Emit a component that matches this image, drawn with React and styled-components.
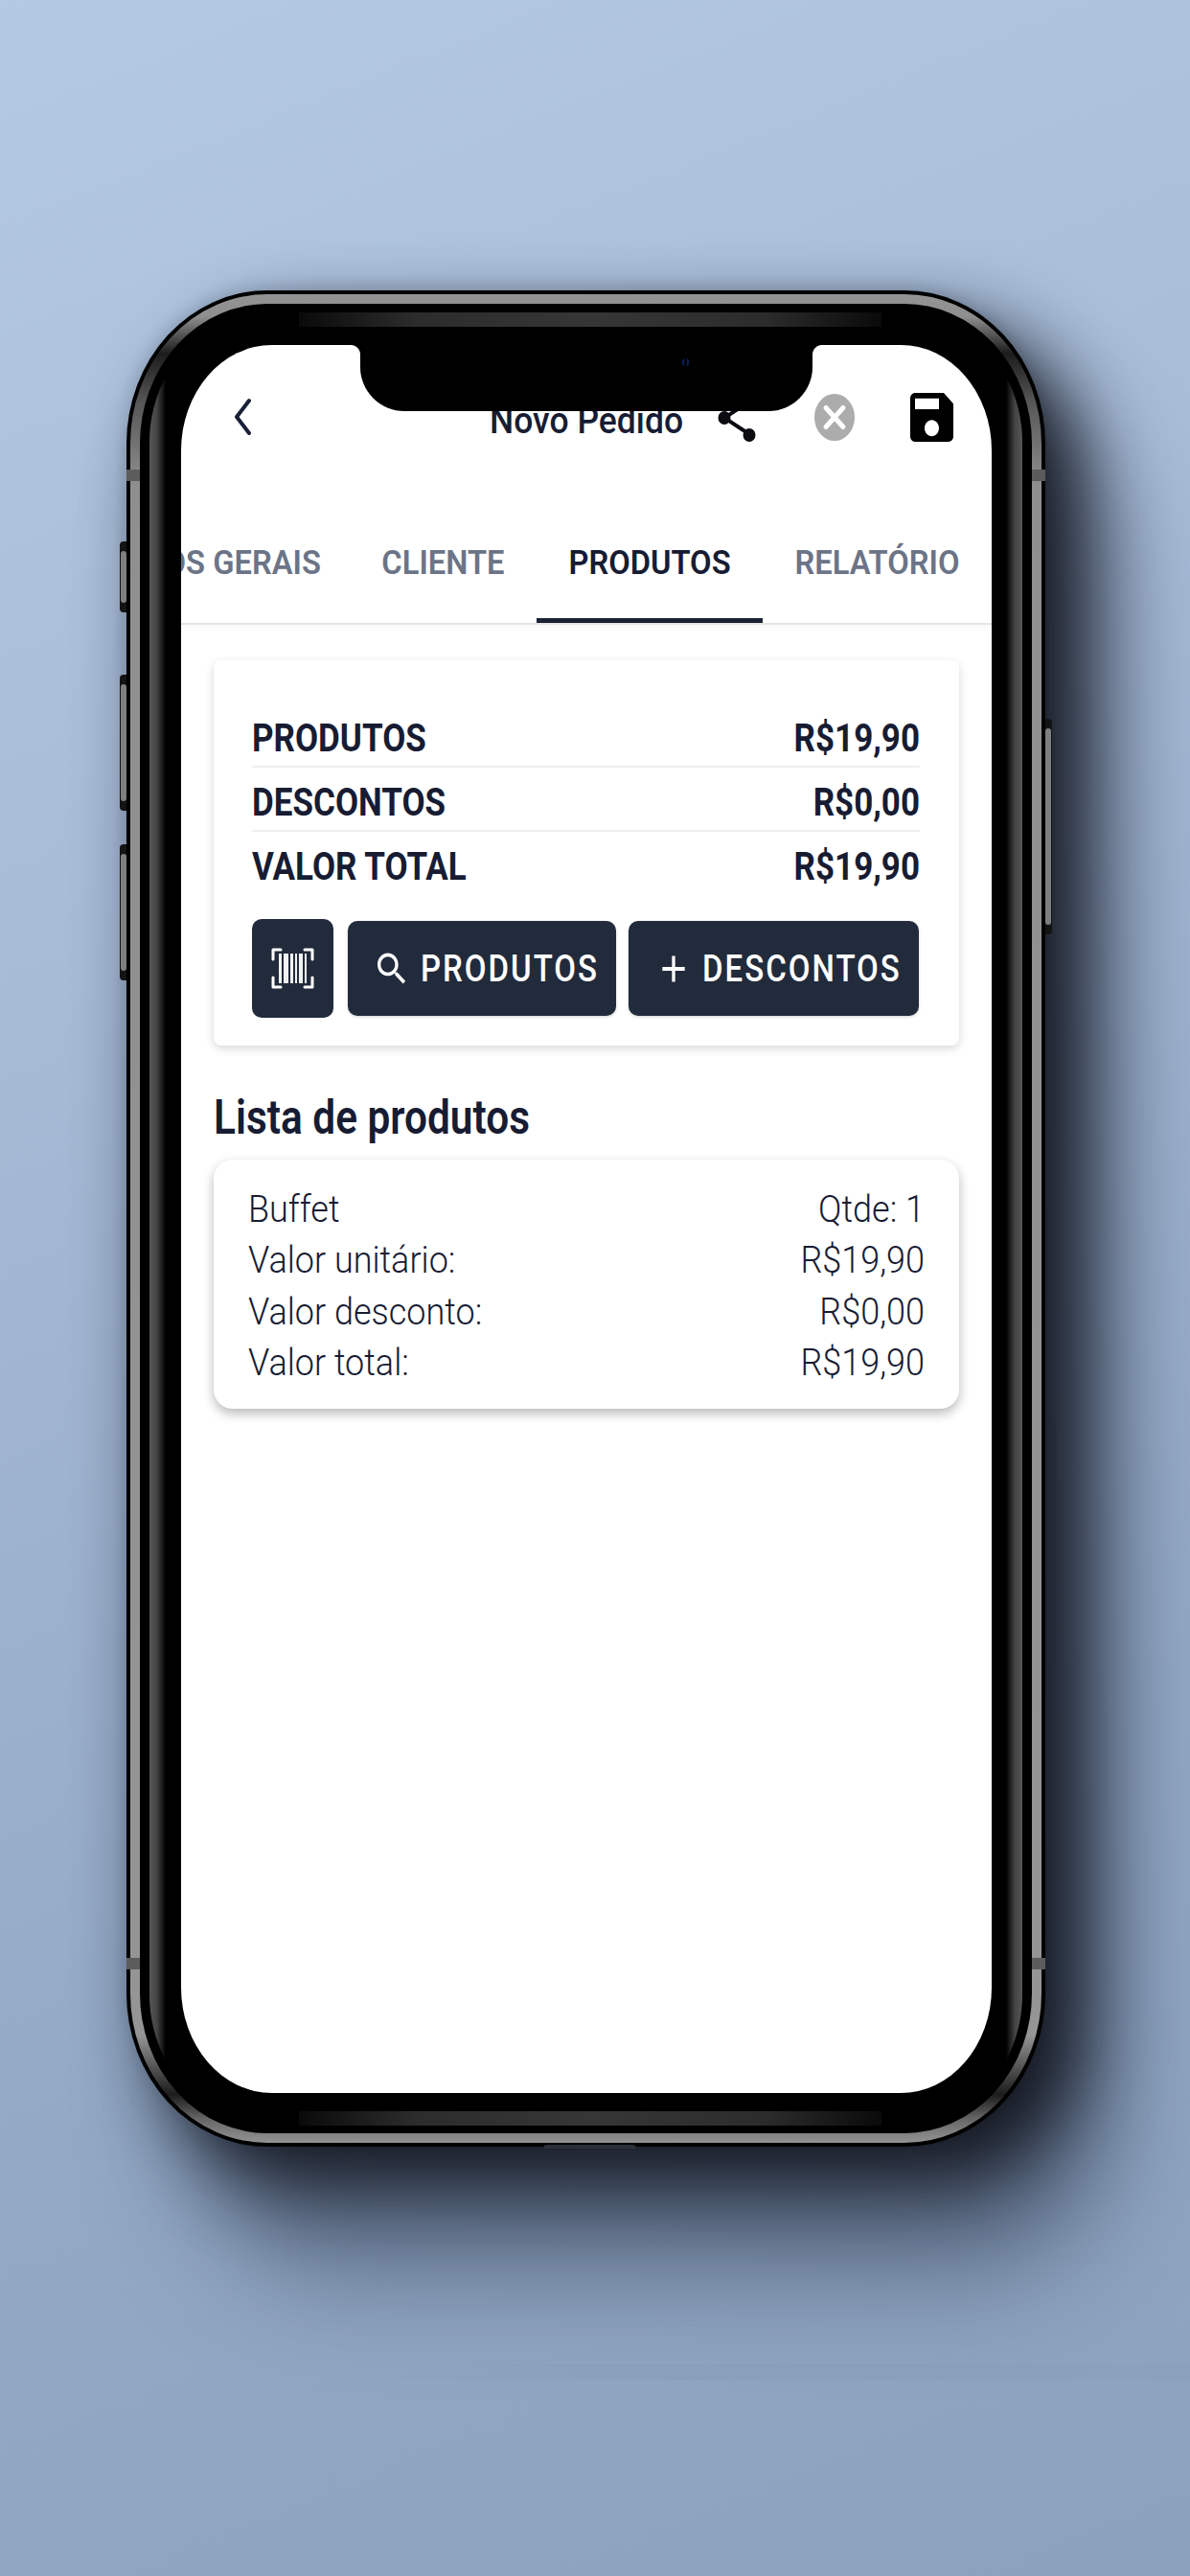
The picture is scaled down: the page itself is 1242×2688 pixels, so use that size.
import React from "react";
import styled, { createGlobalStyle, css } from "styled-components";

const navy = "#171c33";
const btn = "#222b3c";

const Global = createGlobalStyle`
  html, body { margin: 0; padding: 0; }
  body { font-family: Roboto, "Liberation Sans", sans-serif; }
  * { box-sizing: border-box; }
`;

const Page = styled.div`
  width: 1242px;
  height: 2688px;
  padding: 303px 0 0 132px;
  overflow: hidden;
  background:
    linear-gradient(to right, transparent, rgba(110,115,140,.06) 25%, rgba(110,115,140,.05) 100%) 400px 2467px / 842px 16px no-repeat,
    linear-gradient(158deg, #b4c9e3 0%, #a6bad6 35%, #93a9c6 70%, #8ba1be 100%);
`;

const Device = styled.div`
  position: relative;
  width: 959px;
  height: 1937px;
  padding: 57px;
  background: #000;
  border-radius: 147px / 160px;
  box-shadow:
    38px 38px 80px rgba(15, 18, 26, .95),
    70px 130px 110px rgba(40, 50, 70, .5),
    0 -4px 14px rgba(40, 50, 70, .18);
`;

const Bezel = styled.svg`
  position: absolute;
  inset: 0;
  width: 959px;
  height: 1937px;
  pointer-events: none;
`;

const SideButton = styled.div`
  position: absolute;
  ${p => (p.$right ? "right: -7px; border-radius: 0 4px 4px 0;" : "left: -7px; border-radius: 4px 0 0 4px;")}
  top: ${p => p.$top}px;
  width: 7px;
  height: ${p => p.$h}px;
  background: #141414;
  &::after {
    content: "";
    position: absolute;
    top: 10px;
    bottom: 10px;
    ${p => (p.$right ? "left: 0; right: 1px;" : "left: 1px; right: 0;")}
    background: #7f7f7f;
    border-radius: 3px;
  }
`;

const BottomBump = styled.div`
  position: absolute;
  left: 435px;
  bottom: -2px;
  width: 97px;
  height: 4px;
  background: #2b2f38;
  border-radius: 4px 4px 0 0;
`;

const Screen = styled.div`
  position: relative;
  z-index: 1;
  width: 846px;
  height: 1824px;
  background: #fff;
  border-radius: 95px / 110px;
  overflow: hidden;
  color: ${navy};
`;

const Notch = styled.div`
  position: absolute;
  z-index: 3;
  top: 0;
  left: 187px;
  width: 472px;
  height: 69px;
  background: #000;
  border-radius: 0 0 46px 46px;
  &::before, &::after {
    content: "";
    position: absolute;
    top: 0;
    width: 10px;
    height: 10px;
  }
  &::before {
    left: -10px;
    background: radial-gradient(circle at 0 100%, #fff 9.5px, #000 10.5px);
  }
  &::after {
    right: -10px;
    background: radial-gradient(circle at 100% 100%, #fff 9.5px, #000 10.5px);
  }
`;

const Camera = styled.span`
  position: absolute;
  top: 14px;
  left: 336px;
  width: 7px;
  height: 8px;
  border: solid #0a1f5c;
  border-width: 0 2px;
  border-radius: 4px;
`;

const stretch = css`
  display: inline-block;
  transform: scaleY(1.1);
`;

const Header = styled.header`
  display: flex;
  align-items: center;
  height: 150px;
  padding-left: 54px;
`;

const IconBox = styled.span`
  display: flex;
  flex: none;
  margin-left: ${p => p.$ml || 0}px;
`;

const Title = styled.span`
  ${stretch}
  margin-left: 248px;
  padding-top: 6px;
  width: 203px;
  font-size: 35.5px;
  font-weight: 500;
  white-space: nowrap;
`;

const Tabs = styled.nav`
  display: flex;
  justify-content: flex-end;
  height: 142px;
  border-bottom: 2px solid #e4e4e6;
  box-shadow: 0 3px 8px rgba(0, 0, 0, .035);
`;

const Tab = styled.div`
  display: flex;
  flex: none;
  align-items: center;
  padding: 14px 33.5px 0;
  font-size: 32.7px;
  font-weight: 600;
  white-space: nowrap;
  color: ${p => (p.$active ? navy : "#6c7487")};
  box-shadow: ${p => (p.$active ? "inset 0 -5px 0 #1a2233" : "none")};
  &:first-child { padding-right: 30px; }
  span { ${stretch} }
`;

const Body = styled.main`
  margin: 0 24px;
  padding: 37px 10px 15px;
  overflow: hidden;
`;

const SummaryCard = styled.section`
  padding: 45px 41px 29px 40px;
  background: #fff;
  border-radius: 8px;
  box-shadow: 0 3px 10px rgba(0, 0, 0, .16);
`;

const SummaryRow = styled.div`
  display: flex;
  justify-content: space-between;
  align-items: center;
  height: 67px;
  padding-top: 8px;
  font-size: 35px;
  font-weight: 700;
  border-bottom: 2px solid ${p => (p.$last ? "transparent" : "#eeeeef")};
  span { display: inline-block; transform: scaleY(1.16); }
`;

const Actions = styled.div`
  display: flex;
  align-items: center;
  height: 103px;
  margin-top: 24px;
`;

const ScanButton = styled.div`
  display: flex;
  flex: none;
  align-items: center;
  justify-content: center;
  width: 85px;
  height: 103px;
  background: ${btn};
  border-radius: 10px;
  margin-right: ${p => p.$mr}px;
`;

const ActionButton = styled.div`
  display: flex;
  flex: none;
  align-items: center;
  gap: 10px;
  width: ${p => p.$w}px;
  height: 99px;
  padding-left: ${p => p.$pl}px;
  margin-right: ${p => p.$mr || 0}px;
  background: ${btn};
  border-radius: 10px;
  color: #fff;
  font-size: 33px;
  font-weight: 500;
  letter-spacing: 2px;
  box-shadow: 0 1px 3px rgba(0, 0, 0, .2);
  span { display: inline-block; transform: scaleY(1.15); }
`;

const Heading = styled.h2`
  margin: 46px 0 13px 0;
  height: 60px;
  line-height: 60px;
  font-size: 42.4px;
  font-weight: 600;
  span { display: inline-block; transform: scaleY(1.17); }
`;

const ItemCard = styled.section`
  height: 260px;
  padding: 25px 36px 0;
  background: #fff;
  border-radius: 20px;
  box-shadow: 0 5px 12px rgba(0, 0, 0, .28);
`;

const ItemRow = styled.div`
  display: flex;
  justify-content: space-between;
  align-items: center;
  height: 53.5px;
  font-size: 36px;
  font-weight: 350;
  span { ${stretch} }
`;

const BezelArt = () => (
  <Bezel viewBox="0 0 959 1937" aria-hidden="true">
    <defs>
      <linearGradient id="stripTop" x1="0" x2="1" y1="0" y2="0">
        <stop offset="0" stopColor="#0a0a0a" />
        <stop offset=".2" stopColor="#2c2c2c" />
        <stop offset=".5" stopColor="#363636" />
        <stop offset=".8" stopColor="#2c2c2c" />
        <stop offset="1" stopColor="#0a0a0a" />
      </linearGradient>
      <linearGradient id="bandL" gradientUnits="userSpaceOnUse" x1="24" x2="41" y1="0" y2="0">
        <stop offset="0" stopColor="#565656" />
        <stop offset=".45" stopColor="#444" />
        <stop offset="1" stopColor="#000" />
      </linearGradient>
      <linearGradient id="rim" gradientUnits="userSpaceOnUse" x1="0" x2="0" y1="0" y2="1937">
        <stop offset="0" stopColor="#949494" />
        <stop offset=".014" stopColor="#8f8f8f" />
        <stop offset=".034" stopColor="#1c1c1c" />
        <stop offset=".06" stopColor="#565656" />
        <stop offset=".105" stopColor="#8f8f8f" />
        <stop offset=".94" stopColor="#959595" />
        <stop offset=".972" stopColor="#1c1c1c" />
        <stop offset=".985" stopColor="#666" />
        <stop offset="1" stopColor="#9a9a9a" />
      </linearGradient>
    </defs>
    <rect x="9" y="9" width="941" height="1919" rx="138" ry="151" fill="none" stroke="url(#rim)" strokeWidth="10" />
    {[0, 1].map(i => (
      <g key={i} transform={i ? "translate(959 0) scale(-1 1)" : undefined}>
        <path d="M90 39 A123 135 0 0 0 24 160 L24 1777 A123 135 0 0 0 90 1898 Q42 1860 41 1777 L41 160 Q42 77 90 39 Z" fill="url(#bandL)" />
        <rect x="0" y="187" width="14" height="12" fill="#5c5c5c" />
        <rect x="0" y="1740" width="14" height="12" fill="#5c5c5c" />
      </g>
    ))}
    <rect x="180" y="23" width="608" height="15" fill="url(#stripTop)" />
    <rect x="180" y="1900" width="608" height="15" fill="url(#stripTop)" />
  </Bezel>
);

const BackIcon = () => (
  <svg width="20" height="40" viewBox="0 0 20 40" fill="none" stroke="#1a2038" strokeWidth="4" strokeLinecap="round" strokeLinejoin="round">
    <path d="M17 3 L4 20 L17 37" />
  </svg>
);

const ShareIcon = () => (
  <svg width="40" height="60" viewBox="0 0 40 60" fill="#0b0b10" stroke="#0b0b10">
    <path d="M33 14 L7 31 L33 48" fill="none" strokeWidth="4" />
    <ellipse cx="33" cy="14" rx="6.5" ry="7" strokeWidth="0" />
    <ellipse cx="7" cy="31" rx="6.5" ry="7" strokeWidth="0" />
    <ellipse cx="33" cy="49" rx="6.5" ry="7" strokeWidth="0" />
  </svg>
);

const CloseIcon = () => (
  <svg width="42" height="49" viewBox="0 0 42 49">
    <ellipse cx="21" cy="24.5" rx="21" ry="24.5" fill="#acacac" />
    <path d="M12 14.5 L30 34.5 M30 14.5 L12 34.5" stroke="#fff" strokeWidth="5" strokeLinecap="round" />
  </svg>
);

const SaveIcon = () => (
  <svg width="45" height="51" viewBox="3 3 18 18" preserveAspectRatio="none" fill="#000">
    <path d="M17 3H5c-1.11 0-2 .9-2 2v14c0 1.1.89 2 2 2h14c1.1 0 2-.9 2-2V7l-4-4zm-5 16c-1.66 0-3-1.34-3-3s1.34-3 3-3 3 1.34 3 3-1.34 3-3 3zm3-10H5V5h10v4z" />
  </svg>
);

const BarcodeIcon = () => (
  <svg width="45" height="43" viewBox="0 0 45 43" fill="none">
    <path d="M10 2 H2 V12 M35 2 H43 V12 M2 31 V41 H10 M43 31 V41 H35" stroke="#fff" strokeWidth="3" strokeLinecap="round" strokeLinejoin="round" />
    <g fill="#f1f2f4">
      <rect x="8" y="6" width="3" height="31" />
      <rect x="13" y="6" width="5" height="31" />
      <rect x="20" y="6" width="3" height="31" />
      <rect x="25" y="6" width="2" height="31" />
      <rect x="29" y="6" width="4" height="31" />
      <rect x="35" y="6" width="2" height="31" />
    </g>
  </svg>
);

const SearchIcon = () => (
  <svg width="40" height="44" viewBox="0 0 24 24" preserveAspectRatio="none" fill="#fff">
    <path d="M15.5 14h-.79l-.28-.27C15.41 12.59 16 11.11 16 9.5 16 5.91 13.09 3 9.5 3S3 5.91 3 9.5 5.91 16 9.5 16c1.61 0 3.09-.59 4.23-1.57l.27.28v.79l5 4.99L20.49 19l-4.99-5zm-6 0C7.01 14 5 11.99 5 9.5S7.01 5 9.5 5 14 7.01 14 9.5 11.99 14 9.5 14z" />
  </svg>
);

const PlusIcon = () => (
  <svg width="40" height="46" viewBox="0 0 24 24" preserveAspectRatio="none" fill="#fff">
    <path d="M19 13h-6v6h-2v-6H5v-2h6V5h2v6h6v2z" />
  </svg>
);

const tabs = ["DADOS GERAIS", "CLIENTE", "PRODUTOS", "RELATÓRIO"];
const summary = [
  ["PRODUTOS", "R$19,90"],
  ["DESCONTOS", "R$0,00"],
  ["VALOR TOTAL", "R$19,90"],
];
const item = [
  ["Buffet", "Qtde: 1"],
  ["Valor unitário:", "R$19,90"],
  ["Valor desconto:", "R$0,00"],
  ["Valor total:", "R$19,90"],
];

export default function App() {
  return (
    <Page>
      <Global />
      <Device>
        <SideButton $top={262} $h={74} />
        <SideButton $top={401} $h={142} />
        <SideButton $top={578} $h={142} />
        <SideButton $right $top={447} $h={225} />
        <BottomBump />
        <BezelArt />
        <Screen>
          <Notch><Camera /></Notch>
          <Header>
            <IconBox><BackIcon /></IconBox>
            <Title>Novo Pedido</Title>
            <IconBox $ml={35}><ShareIcon /></IconBox>
            <IconBox $ml={61}><CloseIcon /></IconBox>
            <IconBox $ml={58}><SaveIcon /></IconBox>
          </Header>
          <Tabs>
            {tabs.map(t => (
              <Tab key={t} $active={t === "PRODUTOS"}><span>{t}</span></Tab>
            ))}
          </Tabs>
          <Body>
            <SummaryCard>
              {summary.map(([l, v], i) => (
                <SummaryRow key={l} $last={i === 2}><span>{l}</span><span>{v}</span></SummaryRow>
              ))}
              <Actions>
                <ScanButton $mr={15}><BarcodeIcon /></ScanButton>
                <ActionButton $w={280} $pl={26} $mr={13}><SearchIcon /><span>PRODUTOS</span></ActionButton>
                <ActionButton $w={303} $pl={27}><PlusIcon /><span>DESCONTOS</span></ActionButton>
              </Actions>
            </SummaryCard>
            <Heading><span>Lista de produtos</span></Heading>
            <ItemCard>
              {item.map(([l, v]) => (
                <ItemRow key={l}><span>{l}</span><span>{v}</span></ItemRow>
              ))}
            </ItemCard>
          </Body>
        </Screen>
      </Device>
    </Page>
  );
}
